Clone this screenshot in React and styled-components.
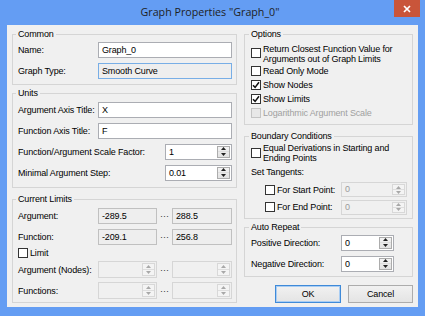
import React from 'react';
import styled, { createGlobalStyle } from 'styled-components';

const GlobalStyle = createGlobalStyle`
  html, body { margin: 0; padding: 0; background: #649df3; }
  * { box-sizing: border-box; }
`;

const Window = styled.div`
  width: 425px;
  height: 316px;
  background: #649df3;
  display: flex;
  flex-direction: column;
  padding: 0 7px 9px 7px;
  font-family: "Liberation Sans", Arial, sans-serif;
  font-size: 9px;
  letter-spacing: -0.15px;
  color: #000;
`;

const TitleBar = styled.div`
  height: 25px;
  flex: none;
  display: grid;
  grid-template-columns: 1fr auto 1fr;
  align-items: start;
  margin: 0 -7px;
  padding-right: 5px;
`;

const Title = styled.div`
  grid-column: 2;
  line-height: 25px;
  font-family: "Open Sans", "Noto Sans", sans-serif;
  font-size: 10.7px;
  letter-spacing: 0;
  color: #1e1e1e;
`;

const CloseButton = styled.div`
  grid-column: 3;
  justify-self: end;
  width: 26px;
  height: 17px;
  background: #c9553a;
  display: flex;
  align-items: center;
  justify-content: center;
`;

const Client = styled.div`
  flex: 1;
  background: #f0f0f0;
  display: grid;
  grid-template-columns: 225px 169px;
  column-gap: 7px;
  padding: 0 5px;
`;

const Column = styled.div`
  display: flex;
  flex-direction: column;
`;

const Group = styled.section`
  border: 1px solid #d5d5d5;
  margin-top: ${p => p.$mt}px;
  padding: 0 ${p => p.$pr ?? 4}px 0 ${p => p.$pl ?? 5}px;
`;

const GroupTitle = styled.div`
  width: fit-content;
  height: 11px;
  line-height: 11px;
  margin: -6px 0 0 -2px;
  padding: 0 2px;
  background: #f0f0f0;
`;

const Body = styled.div`
  display: flex;
  flex-direction: column;
  margin-top: ${p => p.$mt ?? 0}px;
  padding-bottom: ${p => p.$pb ?? 0}px;
`;

const Row = styled.div`
  height: ${p => p.$h ?? 21}px;
  display: grid;
  grid-template-columns: ${p => p.$cols};
  align-items: center;
`;

const Label = styled.span`
  white-space: nowrap;
  color: ${p => (p.$disabled ? '#a0a0a0' : '#000')};
`;

const TextBox = styled.div`
  height: ${p => p.$h ?? 16}px;
  border: 1px solid ${p => (p.$focus ? '#78aee6' : p.$readOnly ? '#c0c0c0' : '#abadb3')};
  background: ${p => (p.$readOnly || p.$focus ? '#eeeeee' : '#fff')};
  padding-left: 3px;
  line-height: ${p => (p.$h ?? 16) - 2}px;
  white-space: nowrap;
  overflow: hidden;
`;

const Dots = styled.span`
  text-align: center;
  color: #333;
  letter-spacing: 0;
  line-height: 10px;
`;

const SpinBox = styled.div`
  width: ${p => p.$w}px;
  height: ${p => p.$h}px;
  justify-self: end;
  display: flex;
  border: 1px solid ${p => (p.$disabled ? '#d6d6d6' : '#abadb3')};
  background: ${p => (p.$disabled ? '#f0f0f0' : '#fff')};
`;

const SpinValue = styled.span`
  flex: 1;
  padding-left: 3px;
  line-height: ${p => p.$h - 2}px;
  color: ${p => (p.$disabled ? '#9a9a9a' : '#000')};
`;

const SpinButtons = styled.div`
  width: 13px;
  margin: 1px;
  display: flex;
  flex-direction: column;
  border: 1px solid ${p => (p.$disabled ? '#d8d8d8' : '#acacac')};
  background: ${p => (p.$disabled ? '#f4f4f4' : 'linear-gradient(#f3f3f3, #e2e2e2)')};
`;

const SpinHalf = styled.div`
  flex: 1;
  display: flex;
  align-items: center;
  justify-content: center;
  & + & {
    border-top: 1px solid ${p => (p.$disabled ? '#dedede' : '#c4c4c4')};
  }
`;

const CheckRow = styled.label`
  height: ${p => p.$h ?? 14}px;
  display: flex;
  align-items: center;
  gap: 2px;
  padding-left: ${p => p.$indent ?? 0}px;
  line-height: 10px;
  color: ${p => (p.$disabled ? '#a0a0a0' : '#000')};
`;

const Box = styled.span`
  width: 10px;
  height: 10px;
  flex: none;
  display: flex;
  align-items: center;
  justify-content: center;
  border: 1px solid ${p => (p.$disabled ? '#c4c4c4' : '#333')};
  background: ${p => (p.$disabled ? '#e8e8e8' : '#fff')};
  margin-top: ${p => p.$mt ?? 0}px;
`;

const TangentGrid = styled.div`
  height: ${p => p.$h}px;
  display: grid;
  grid-template-columns: 90px 66px;
  align-items: center;
`;

const ButtonRow = styled.div`
  margin-top: 8px;
  display: flex;
  justify-content: flex-end;
  gap: 7px;
`;

const Button = styled.div`
  width: ${p => p.$w}px;
  height: 18px;
  display: flex;
  align-items: center;
  justify-content: center;
  border: 1px solid ${p => (p.$default ? '#3f8ad8' : '#acacac')};
  box-shadow: ${p => (p.$default ? 'inset 0 0 0 1px #a9cdf3' : 'none')};
  background: linear-gradient(#f1f1f1, #e4e4e4);
`;

function Arrow({ up, disabled }) {
  return (
    <svg width="5" height="3" viewBox="0 0 5 3">
      <polygon
        points={up ? '0,3 5,3 2.5,0' : '0,0 5,0 2.5,3'}
        fill={disabled ? '#a8a8a8' : '#222'}
      />
    </svg>
  );
}

function Spin({ value, w, h = 16, disabled }) {
  return (
    <SpinBox $w={w} $h={h} $disabled={disabled}>
      <SpinValue $h={h} $disabled={disabled}>{value}</SpinValue>
      <SpinButtons $disabled={disabled}>
        <SpinHalf $disabled={disabled}><Arrow up disabled={disabled} /></SpinHalf>
        <SpinHalf $disabled={disabled}><Arrow disabled={disabled} /></SpinHalf>
      </SpinButtons>
    </SpinBox>
  );
}

function Check({ checked, disabled, h, indent, mt, children }) {
  return (
    <CheckRow $h={h} $indent={indent} $disabled={disabled}>
      <Box $disabled={disabled} $mt={mt}>
        {checked && (
          <svg width="8" height="8" viewBox="0 0 8 8">
            <path d="M1 4.3 L3.1 6.4 L7 1.2" fill="none" stroke="#111" strokeWidth="1.5" />
          </svg>
        )}
      </Box>
      <span>{children}</span>
    </CheckRow>
  );
}

export default function App() {
  return (
    <>
      <GlobalStyle />
      <Window>
        <TitleBar>
          <Title>Graph Properties "Graph_0"</Title>
          <CloseButton>
            <svg width="8" height="8" viewBox="0 0 8 8">
              <path d="M1 1 L7 7 M7 1 L1 7" stroke="#fff" strokeWidth="1.7" />
            </svg>
          </CloseButton>
        </TitleBar>
        <Client>
          <Column>
            <Group $mt={9}>
              <GroupTitle>Common</GroupTitle>
              <Body $mt={-1} $pb={3}>
                <Row $cols="80px 1fr">
                  <Label>Name:</Label>
                  <TextBox>Graph_0</TextBox>
                </Row>
                <Row $cols="80px 1fr">
                  <Label>Graph Type:</Label>
                  <TextBox $focus>Smooth Curve</TextBox>
                </Row>
              </Body>
            </Group>
            <Group $mt={8}>
              <GroupTitle>Units</GroupTitle>
              <Body $mt={0} $pb={4}>
                <Row $cols="80px 1fr">
                  <Label>Argument Axis Title:</Label>
                  <TextBox>X</TextBox>
                </Row>
                <Row $cols="80px 1fr">
                  <Label>Function Axis Title:</Label>
                  <TextBox>F</TextBox>
                </Row>
                <Row $cols="1fr auto">
                  <Label>Function/Argument Scale Factor:</Label>
                  <Spin value="1" w={67} />
                </Row>
                <Row $cols="1fr auto">
                  <Label>Minimal Argument Step:</Label>
                  <Spin value="0.01" w={67} />
                </Row>
              </Body>
            </Group>
            <Group $mt={11}>
              <GroupTitle>Current Limits</GroupTitle>
              <Body $mt={0} $pb={1}>
                <Row $cols="80px 59px 15px 60px">
                  <Label>Argument:</Label>
                  <TextBox $readOnly>-289.5</TextBox>
                  <Dots>···</Dots>
                  <TextBox $readOnly>288.5</TextBox>
                </Row>
                <Row $cols="80px 59px 15px 60px">
                  <Label>Function:</Label>
                  <TextBox $readOnly>-209.1</TextBox>
                  <Dots>···</Dots>
                  <TextBox $readOnly>256.8</TextBox>
                </Row>
                <Check h={12}>Limit</Check>
                <Row $cols="80px 59px 15px 60px">
                  <Label>Argument (Nodes):</Label>
                  <Spin value="" w={59} h={17} disabled />
                  <Dots>···</Dots>
                  <Spin value="" w={60} h={17} disabled />
                </Row>
                <Row $cols="80px 59px 15px 60px">
                  <Label>Functions:</Label>
                  <Spin value="" w={59} h={17} disabled />
                  <Dots>···</Dots>
                  <Spin value="" w={60} h={17} disabled />
                </Row>
              </Body>
            </Group>
          </Column>
          <Column>
            <Group $mt={9} $pl={6} $pr={5}>
              <GroupTitle>Options</GroupTitle>
              <Body $mt={3} $pb={4}>
                <Check h={21} mt={-1}>
                  Return Closest Function Value for<br />Arguments out of Graph Limits
                </Check>
                <Check>Read Only Mode</Check>
                <Check checked>Show Nodes</Check>
                <Check checked>Show Limits</Check>
                <Check disabled>Logarithmic Argument Scale</Check>
              </Body>
            </Group>
            <Group $mt={11} $pl={6} $pr={5}>
              <GroupTitle>Boundary Conditions</GroupTitle>
              <Body $mt={0} $pb={2}>
                <Check h={21}>
                  Equal Derivations in Starting and<br />Ending Points
                </Check>
                <Row $h={18} $cols="1fr">
                  <Label>Set Tangents:</Label>
                </Row>
                <TangentGrid $h={17}>
                  <Check indent={14}>For Start Point:</Check>
                  <Spin value="0" w={66} h={15} disabled />
                </TangentGrid>
                <TangentGrid $h={18}>
                  <Check indent={14}>For End Point:</Check>
                  <Spin value="0" w={66} h={15} disabled />
                </TangentGrid>
              </Body>
            </Group>
            <Group $mt={8} $pl={6} $pr={5}>
              <GroupTitle>Auto Repeat</GroupTitle>
              <Body $mt={-1} $pb={2}>
                <Row $cols="90px 53px">
                  <Label>Positive Direction:</Label>
                  <Spin value="0" w={53} />
                </Row>
                <Row $cols="90px 53px">
                  <Label>Negative Direction:</Label>
                  <Spin value="0" w={53} />
                </Row>
              </Body>
            </Group>
            <ButtonRow>
              <Button $w={66} $default>OK</Button>
              <Button $w={65}>Cancel</Button>
            </ButtonRow>
          </Column>
        </Client>
      </Window>
    </>
  );
}
